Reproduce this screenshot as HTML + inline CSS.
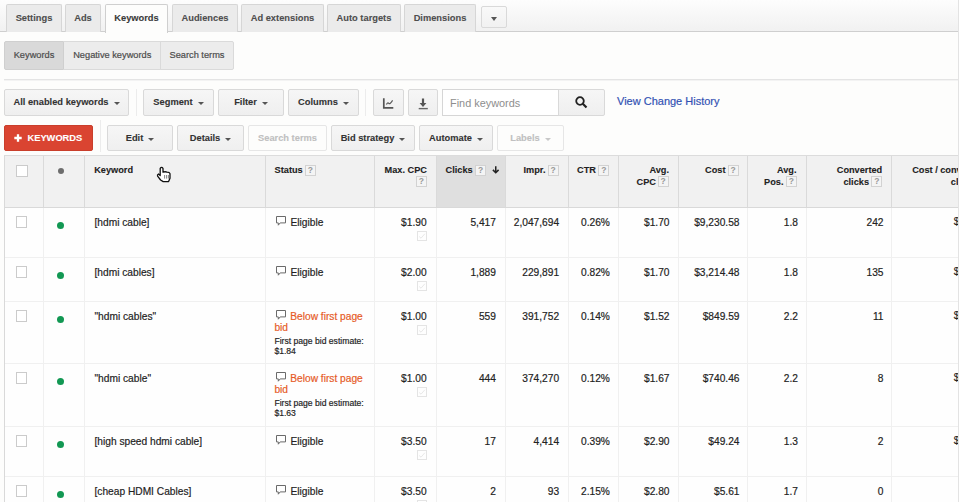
<!DOCTYPE html>
<html><head><meta charset="utf-8">
<style>
*{box-sizing:border-box;margin:0;padding:0}
html,body{width:959px;height:502px;overflow:hidden;background:#fdfdfc;font-family:"Liberation Sans",sans-serif;color:#222}
.a{position:absolute}
#tabbar{left:0;top:0;width:959px;height:32px;background:linear-gradient(#fdfdfd,#f1f1f1);border-bottom:1px solid #cfcfcf}
.tab{-webkit-text-stroke:0.1px currentColor;position:absolute;top:4px;height:28px;background:#ebebeb;border:1px solid #d6d6d6;border-bottom:none;border-radius:2px 2px 0 0;font-weight:bold;font-size:9.3px;color:#4e4e4e;text-align:center;line-height:27px}
.tab.on{background:#fdfdfc;height:29px;border-color:#cfcfcf}
#rline{left:958px;top:0;width:1px;height:502px;background:#c8c8c8}
.sub{border-radius:0;-webkit-text-stroke:0.2px currentColor;position:absolute;top:41px;height:29px;background:#ececec;border:1px solid #dadada;font-size:9.25px;color:#4c4c4c;line-height:26.3px;text-align:center}
.hl{left:4px;top:79px;width:955px;height:2px;background:linear-gradient(#e4e4e4 50%,#f3f3f3 50%)}
.btn{-webkit-text-stroke:0.1px currentColor;position:absolute;height:26px;background:linear-gradient(#f6f6f6,#efefef);border:1px solid #d9d9d9;border-radius:2px;font-weight:bold;font-size:9.3px;color:#333;text-align:center;line-height:24px;white-space:nowrap}
.btn.dis{background:#fdfdfc;border-color:#e6e6e6;color:#c0c0c0}
.caret{display:inline-block;width:0;height:0;border-left:3.5px solid transparent;border-right:3.5px solid transparent;border-top:3.5px solid #555;vertical-align:middle;margin-left:5px;margin-top:-1px;position:relative;top:1px}
.dis .caret{border-top-color:#c8c8c8}
.vd{position:absolute;width:1px;background:#ececec}
#table{left:4px;top:155px;width:954px;height:347px}
.th{position:absolute;top:156px;height:51px;background:#f1f1f1}
.hd{position:absolute;font-weight:bold;font-size:9.4px;color:#333;line-height:12px}
.q{position:absolute;width:11px;height:11px;border:1px solid #d2d2d2;background:#f4f4f4;color:#999;font-weight:bold;font-size:8.5px;line-height:9.5px;text-align:center}
.cl{position:absolute;width:1px;background:#dedede}
.rl{position:absolute;left:4px;width:954px;height:1px;background:#ececec}
.t{position:absolute;font-size:10px;color:#222;white-space:nowrap;line-height:12px;-webkit-text-stroke:0.18px currentColor}
.r{text-align:right}
.cb{position:absolute;left:16px;width:11px;height:11.5px;border:1px solid #cbcbcb;background:#fff}
.dot{position:absolute;left:58px;width:6.5px;height:6.5px;border-radius:50%;background:#1e9e5a}
.bub{position:absolute;width:11px;height:10px}
.or{color:#e4602c}
.sm{font-size:9px;line-height:10px}
.ed{position:absolute;width:10px;height:10px;border:1px solid #e3e3e3}
</style></head><body>
<div id="tabbar" class="a"></div>
<div class="tab" style="left:6px;width:56px">Settings</div>
<div class="tab" style="left:65px;width:36px">Ads</div>
<div class="tab on" style="left:105px;width:63px;color:#3a3a3a">Keywords</div>
<div class="tab" style="left:172px;width:66px">Audiences</div>
<div class="tab" style="left:241px;width:83px">Ad extensions</div>
<div class="tab" style="left:327px;width:74px">Auto targets</div>
<div class="tab" style="left:404px;width:72px">Dimensions</div>
<div class="btn" style="left:481px;top:6px;width:26px;height:22px;line-height:21px;background:linear-gradient(#f9f9f9,#f1f1f1)"><span class="caret" style="margin-left:0;border-left-width:3.8px;border-right-width:3.8px;border-top-width:4px;margin-top:0"></span></div>

<div class="sub" style="left:4px;width:60px;background:#d9d9d9;border-color:#cfcfcf;border-radius:2px 0 0 2px">Keywords</div>
<div class="sub" style="left:64px;width:96.5px;border-left:none;border-right:none">Negative keywords</div>
<div class="sub" style="left:160px;width:74px;border-radius:0 2px 2px 0">Search terms</div>
<div class="a hl"></div>

<!-- toolbar row 1 -->
<div class="btn" style="left:4px;top:89px;width:125px;height:27px;line-height:25px">All enabled keywords<span class="caret"></span></div>
<div class="vd" style="left:136px;top:89px;height:27px"></div>
<div class="btn" style="left:143px;top:89px;width:71px;height:27px;line-height:25px">Segment<span class="caret"></span></div>
<div class="btn" style="left:218px;top:89px;width:66px;height:27px;line-height:25px">Filter<span class="caret"></span></div>
<div class="btn" style="left:288px;top:89px;width:71px;height:27px;line-height:25px">Columns<span class="caret"></span></div>
<div class="vd" style="left:365px;top:89px;height:27px"></div>
<div class="btn" style="left:373px;top:89px;width:31px;height:27px;line-height:25px">
 <svg class="a" style="left:8.2px;top:6px" width="14" height="14" viewBox="0 0 14 14"><path d="M1.8 2.3V11.9H11.3" fill="none" stroke="#555" stroke-width="1.7"/><path d="M4.4 8.6Q5.6 6 6.8 7.3T10.6 4.4" fill="none" stroke="#5a5a5a" stroke-width="1.2"/></svg>
</div>
<div class="btn" style="left:408px;top:89px;width:30px;height:27px;line-height:25px">
 <svg class="a" style="left:8.2px;top:6px" width="14" height="14" viewBox="0 0 14 14"><path d="M6 2.5V7.5" stroke="#555" stroke-width="2.2"/><path d="M2.6 7H9.4L6 10.9Z" fill="#555"/><path d="M1.7 12.6H10.8" stroke="#666" stroke-width="1.4"/></svg>
</div>
<div class="a" style="left:442px;top:89px;width:117px;height:27px;background:#fff;border:1px solid #d6d6d6;border-right:none;font-size:10.9px;color:#8e8e8e;line-height:26.5px;padding-left:7px">Find keywords</div>
<div class="btn" style="left:558px;top:89px;width:47px;height:27px;border-radius:0 2px 2px 0">
 <svg class="a" style="left:16px;top:6px" width="13" height="13" viewBox="0 0 13 13"><circle cx="5" cy="5" r="3.8" fill="none" stroke="#222" stroke-width="1.8"/><path d="M7.8 7.8L11.5 11.5" stroke="#222" stroke-width="2.2"/></svg>
</div>
<div class="t" style="left:617px;top:95.3px;font-size:11px;color:#3151b3">View Change History</div>

<!-- toolbar row 2 -->
<div class="btn" style="left:4px;top:125px;width:89px;background:#da4431;border-color:#c93e2b;color:#fff;font-size:9.3px"><svg class="a" style="left:9.3px;top:7.6px" width="8" height="8" viewBox="0 0 8 8"><path d="M4 0.3V7.7M0.3 4H7.7" stroke="#fff" stroke-width="2.3"/></svg><span style="position:absolute;left:22.5px;top:0">KEYWORDS</span></div>
<div class="vd" style="left:100px;top:120px;height:32px"></div>
<div class="btn" style="left:107px;top:125px;width:66px">Edit<span class="caret"></span></div>
<div class="btn" style="left:177px;top:125px;width:67px">Details<span class="caret"></span></div>
<div class="btn dis" style="left:248px;top:125px;width:79px;font-weight:bold">Search terms</div>
<div class="btn" style="left:331px;top:125px;width:84px">Bid strategy<span class="caret"></span></div>
<div class="btn" style="left:419px;top:125px;width:74px">Automate<span class="caret"></span></div>
<div class="btn dis" style="left:497px;top:125px;width:67px">Labels<span class="caret"></span></div>

<!-- table -->
<div class="a" style="left:4px;top:207px;width:954px;height:295px;background:#fefefe"></div>
<div class="a" style="left:4px;top:155px;width:954px;height:53px;background:#f1f1f1;border-top:1px solid #dcdcdc;border-bottom:1px solid #d9d9d9"></div>
<div class="a" style="left:436px;top:156px;width:69px;height:51px;background:#dfdfdf"></div>
<div class="a" style="left:4px;top:257px;width:954px;height:1px;background:#f0f0f0"></div>
<div class="a" style="left:4px;top:301px;width:954px;height:1px;background:#f0f0f0"></div>
<div class="a" style="left:4px;top:363px;width:954px;height:1px;background:#f0f0f0"></div>
<div class="a" style="left:4px;top:426px;width:954px;height:1px;background:#f0f0f0"></div>
<div class="a" style="left:4px;top:476px;width:954px;height:1px;background:#f0f0f0"></div>
<div class="a" style="left:4px;top:156px;width:1px;height:51px;background:#dadada"></div>
<div class="a" style="left:4px;top:208px;width:1px;height:294px;background:#d9d9d9"></div>
<div class="a" style="left:43px;top:156px;width:1px;height:51px;background:#dadada"></div>
<div class="a" style="left:43px;top:208px;width:1px;height:294px;background:#f0f0f0"></div>
<div class="a" style="left:84px;top:156px;width:1px;height:51px;background:#dadada"></div>
<div class="a" style="left:84px;top:208px;width:1px;height:294px;background:#f0f0f0"></div>
<div class="a" style="left:265px;top:156px;width:1px;height:51px;background:#dadada"></div>
<div class="a" style="left:265px;top:208px;width:1px;height:294px;background:#f0f0f0"></div>
<div class="a" style="left:374px;top:156px;width:1px;height:51px;background:#dadada"></div>
<div class="a" style="left:374px;top:208px;width:1px;height:294px;background:#f0f0f0"></div>
<div class="a" style="left:436px;top:156px;width:1px;height:51px;background:#dadada"></div>
<div class="a" style="left:436px;top:208px;width:1px;height:294px;background:#f0f0f0"></div>
<div class="a" style="left:505px;top:156px;width:1px;height:51px;background:#dadada"></div>
<div class="a" style="left:505px;top:208px;width:1px;height:294px;background:#f0f0f0"></div>
<div class="a" style="left:568px;top:156px;width:1px;height:51px;background:#dadada"></div>
<div class="a" style="left:568px;top:208px;width:1px;height:294px;background:#f0f0f0"></div>
<div class="a" style="left:618px;top:156px;width:1px;height:51px;background:#dadada"></div>
<div class="a" style="left:618px;top:208px;width:1px;height:294px;background:#f0f0f0"></div>
<div class="a" style="left:678px;top:156px;width:1px;height:51px;background:#dadada"></div>
<div class="a" style="left:678px;top:208px;width:1px;height:294px;background:#f0f0f0"></div>
<div class="a" style="left:747px;top:156px;width:1px;height:51px;background:#dadada"></div>
<div class="a" style="left:747px;top:208px;width:1px;height:294px;background:#f0f0f0"></div>
<div class="a" style="left:806px;top:156px;width:1px;height:51px;background:#dadada"></div>
<div class="a" style="left:806px;top:208px;width:1px;height:294px;background:#f0f0f0"></div>
<div class="a" style="left:891px;top:156px;width:1px;height:51px;background:#dadada"></div>
<div class="a" style="left:891px;top:208px;width:1px;height:294px;background:#f0f0f0"></div>
<div class="a" style="left:958px;top:0;width:1px;height:502px;background:#e3e3e3"></div>
<div class="cb" style="top:165px;height:11.5px;width:11.5px"></div>
<div class="a" style="left:58px;top:167.5px;width:6px;height:6px;border-radius:50%;background:#6d6d6d"></div>
<div class="t" style="top:164.89px;font-size:9.2px;line-height:11.04px;font-weight:bold;-webkit-text-stroke:0.1px currentColor;color:#222;left:94.20px;">Keyword</div>
<div class="t" style="top:164.89px;font-size:9.2px;line-height:11.04px;font-weight:bold;-webkit-text-stroke:0.1px currentColor;color:#222;left:274.60px;">Status</div>
<div class="q" style="left:304.9px;top:164.5px">?</div>
<div class="t" style="top:164.89px;font-size:9.2px;line-height:11.04px;font-weight:bold;-webkit-text-stroke:0.1px currentColor;color:#222;left:127.00px;width:300px;text-align:right;">Max. CPC</div>
<div class="q" style="left:415.9px;top:175.8px">?</div>
<div class="t" style="top:164.89px;font-size:9.2px;line-height:11.04px;font-weight:bold;-webkit-text-stroke:0.1px currentColor;color:#222;left:445.60px;">Clicks</div>
<div class="q" style="left:475.2px;top:164.5px">?</div>
<svg class="a" style="left:491.5px;top:166px" width="8" height="8" viewBox="0 0 8 8"><path d="M3.75 0.3V6.6M0.9 3.9L3.75 6.8L6.6 3.9" fill="none" stroke="#222" stroke-width="1.5"/></svg>
<div class="t" style="top:164.89px;font-size:9.2px;line-height:11.04px;font-weight:bold;-webkit-text-stroke:0.1px currentColor;color:#222;left:245.50px;width:300px;text-align:right;">Impr.</div>
<div class="q" style="left:547.7px;top:164.5px">?</div>
<div class="t" style="top:164.89px;font-size:9.2px;line-height:11.04px;font-weight:bold;-webkit-text-stroke:0.1px currentColor;color:#222;left:296.00px;width:300px;text-align:right;">CTR</div>
<div class="q" style="left:598.4px;top:164.5px">?</div>
<div class="t" style="top:164.89px;font-size:9.2px;line-height:11.04px;font-weight:bold;-webkit-text-stroke:0.1px currentColor;color:#222;left:369.00px;width:300px;text-align:right;">Avg.</div>
<div class="t" style="top:176.89px;font-size:9.2px;line-height:11.04px;font-weight:bold;-webkit-text-stroke:0.1px currentColor;color:#222;left:356.00px;width:300px;text-align:right;">CPC</div>
<div class="q" style="left:657.7px;top:176.2px">?</div>
<div class="t" style="top:164.89px;font-size:9.2px;line-height:11.04px;font-weight:bold;-webkit-text-stroke:0.1px currentColor;color:#222;left:425.50px;width:300px;text-align:right;">Cost</div>
<div class="q" style="left:727.7px;top:164.5px">?</div>
<div class="t" style="top:164.89px;font-size:9.2px;line-height:11.04px;font-weight:bold;-webkit-text-stroke:0.1px currentColor;color:#222;left:496.50px;width:300px;text-align:right;">Avg.</div>
<div class="t" style="top:176.89px;font-size:9.2px;line-height:11.04px;font-weight:bold;-webkit-text-stroke:0.1px currentColor;color:#222;left:483.50px;width:300px;text-align:right;">Pos.</div>
<div class="q" style="left:785.9px;top:176.2px">?</div>
<div class="t" style="top:164.89px;font-size:9.2px;line-height:11.04px;font-weight:bold;-webkit-text-stroke:0.1px currentColor;color:#222;left:582.20px;width:300px;text-align:right;">Converted</div>
<div class="t" style="top:176.89px;font-size:9.2px;line-height:11.04px;font-weight:bold;-webkit-text-stroke:0.1px currentColor;color:#222;left:569.00px;width:300px;text-align:right;">clicks</div>
<div class="q" style="left:871.4px;top:176.2px">?</div>
<div class="a" style="left:892px;top:156px;width:66px;height:51px;overflow:hidden"><div class="t" style="top:8.89px;font-size:9.2px;line-height:11.04px;font-weight:bold;-webkit-text-stroke:0.1px currentColor;color:#222;left:20.20px;">Cost / converted</div>
<div class="t" style="top:20.89px;font-size:9.2px;line-height:11.04px;font-weight:bold;-webkit-text-stroke:0.1px currentColor;color:#222;left:58.80px;">click</div>
</div>
<svg class="a" style="left:150px;top:160px" width="30" height="30" viewBox="0 0 30 30">
<path d="M10.2 14.5V8.4Q11.6 6.4 13 8.4V12.2Q15 11.3 17 12.1Q19.6 12.2 20 13.6V18.2L18.6 21.6H13.2L10.6 20L7.6 16.2Q7 14.6 8.4 14L10.2 15.6Z" fill="#fff" stroke="#111" stroke-width="1.3" stroke-linejoin="round"/>
<path d="M14.6 15v3.6M16.6 15v3.6M18.4 15v3.6" stroke="#777" stroke-width="0.9"/>
</svg>
<div class="cb" style="top:216.2px"></div>
<div class="a" style="left:57.2px;top:222.1px;width:7px;height:7px;border-radius:50%;background:#129853"></div>
<div class="t" style="top:216.85px;font-size:10.2px;line-height:12.24px;color:#222;left:94.50px;">[hdmi cable]</div>
<svg class="a" style="left:276px;top:216.2px" width="11" height="11" viewBox="0 0 11 11"><path d="M0.5 0.5H9.5V6.9H4.2L2.3 9.2V6.9H0.5Z" fill="none" stroke="#6a6a6a" stroke-width="1" stroke-linejoin="miter"/></svg>
<div class="t" style="top:216.85px;font-size:10.2px;line-height:12.24px;color:#222;left:290.50px;">Eligible</div>
<div class="t" style="top:216.85px;font-size:10.2px;line-height:12.24px;color:#222;left:126.60px;width:300px;text-align:right;">$1.90</div>
<div class="t" style="top:216.85px;font-size:10.2px;line-height:12.24px;color:#222;left:195.90px;width:300px;text-align:right;">5,417</div>
<div class="t" style="top:216.85px;font-size:10.2px;line-height:12.24px;color:#222;left:259.10px;width:300px;text-align:right;">2,047,694</div>
<div class="t" style="top:216.85px;font-size:10.2px;line-height:12.24px;color:#222;left:309.90px;width:300px;text-align:right;">0.26%</div>
<div class="t" style="top:216.85px;font-size:10.2px;line-height:12.24px;color:#222;left:369.50px;width:300px;text-align:right;">$1.70</div>
<div class="t" style="top:216.85px;font-size:10.2px;line-height:12.24px;color:#222;left:439.50px;width:300px;text-align:right;">$9,230.58</div>
<div class="t" style="top:216.85px;font-size:10.2px;line-height:12.24px;color:#222;left:498.00px;width:300px;text-align:right;">1.8</div>
<div class="t" style="top:216.85px;font-size:10.2px;line-height:12.24px;color:#222;left:583.50px;width:300px;text-align:right;">242</div>
<svg class="a" style="left:417px;top:230.5px" width="10" height="10" viewBox="0 0 10 10"><rect x="0.5" y="0.5" width="9" height="9" fill="none" stroke="#e4e4e4"/><path d="M2.2 5.5L4 7.2L7.8 2.8" fill="none" stroke="#e8e8e8" stroke-width="1"/></svg>
<div class="a" style="left:892px;top:207px;width:66px;height:40px;overflow:hidden"><div class="t" style="top:8.55px;font-size:10.2px;line-height:12.24px;color:#222;left:61.80px;">$</div>
</div>
<div class="cb" style="top:266.2px"></div>
<div class="a" style="left:57.2px;top:272.1px;width:7px;height:7px;border-radius:50%;background:#129853"></div>
<div class="t" style="top:266.85px;font-size:10.2px;line-height:12.24px;color:#222;left:94.50px;">[hdmi cables]</div>
<svg class="a" style="left:276px;top:266.2px" width="11" height="11" viewBox="0 0 11 11"><path d="M0.5 0.5H9.5V6.9H4.2L2.3 9.2V6.9H0.5Z" fill="none" stroke="#6a6a6a" stroke-width="1" stroke-linejoin="miter"/></svg>
<div class="t" style="top:266.85px;font-size:10.2px;line-height:12.24px;color:#222;left:290.50px;">Eligible</div>
<div class="t" style="top:266.85px;font-size:10.2px;line-height:12.24px;color:#222;left:126.60px;width:300px;text-align:right;">$2.00</div>
<div class="t" style="top:266.85px;font-size:10.2px;line-height:12.24px;color:#222;left:195.90px;width:300px;text-align:right;">1,889</div>
<div class="t" style="top:266.85px;font-size:10.2px;line-height:12.24px;color:#222;left:259.10px;width:300px;text-align:right;">229,891</div>
<div class="t" style="top:266.85px;font-size:10.2px;line-height:12.24px;color:#222;left:309.90px;width:300px;text-align:right;">0.82%</div>
<div class="t" style="top:266.85px;font-size:10.2px;line-height:12.24px;color:#222;left:369.50px;width:300px;text-align:right;">$1.70</div>
<div class="t" style="top:266.85px;font-size:10.2px;line-height:12.24px;color:#222;left:439.50px;width:300px;text-align:right;">$3,214.48</div>
<div class="t" style="top:266.85px;font-size:10.2px;line-height:12.24px;color:#222;left:498.00px;width:300px;text-align:right;">1.8</div>
<div class="t" style="top:266.85px;font-size:10.2px;line-height:12.24px;color:#222;left:583.50px;width:300px;text-align:right;">135</div>
<svg class="a" style="left:417px;top:280.5px" width="10" height="10" viewBox="0 0 10 10"><rect x="0.5" y="0.5" width="9" height="9" fill="none" stroke="#e4e4e4"/><path d="M2.2 5.5L4 7.2L7.8 2.8" fill="none" stroke="#e8e8e8" stroke-width="1"/></svg>
<div class="a" style="left:892px;top:257px;width:66px;height:40px;overflow:hidden"><div class="t" style="top:8.55px;font-size:10.2px;line-height:12.24px;color:#222;left:61.80px;">$</div>
</div>
<div class="cb" style="top:310.2px"></div>
<div class="a" style="left:57.2px;top:316.1px;width:7px;height:7px;border-radius:50%;background:#129853"></div>
<div class="t" style="top:310.85px;font-size:10.2px;line-height:12.24px;color:#222;left:94.50px;">&quot;hdmi cables&quot;</div>
<svg class="a" style="left:276px;top:310.2px" width="11" height="11" viewBox="0 0 11 11"><path d="M0.5 0.5H9.5V6.9H4.2L2.3 9.2V6.9H0.5Z" fill="none" stroke="#6a6a6a" stroke-width="1" stroke-linejoin="miter"/></svg>
<div class="t" style="top:310.85px;font-size:10.2px;line-height:12.24px;color:#e65a26;left:290.30px;">Below first page</div>
<div class="t" style="top:322.45px;font-size:10.2px;line-height:12.24px;color:#e65a26;left:274.40px;">bid</div>
<div class="t" style="top:335.56px;font-size:8.6px;line-height:10.32px;color:#222;left:274.40px;">First page bid estimate:</div>
<div class="t" style="top:346.16px;font-size:8.6px;line-height:10.32px;color:#222;left:274.40px;">$1.84</div>
<div class="t" style="top:310.85px;font-size:10.2px;line-height:12.24px;color:#222;left:126.60px;width:300px;text-align:right;">$1.00</div>
<div class="t" style="top:310.85px;font-size:10.2px;line-height:12.24px;color:#222;left:195.90px;width:300px;text-align:right;">559</div>
<div class="t" style="top:310.85px;font-size:10.2px;line-height:12.24px;color:#222;left:259.10px;width:300px;text-align:right;">391,752</div>
<div class="t" style="top:310.85px;font-size:10.2px;line-height:12.24px;color:#222;left:309.90px;width:300px;text-align:right;">0.14%</div>
<div class="t" style="top:310.85px;font-size:10.2px;line-height:12.24px;color:#222;left:369.50px;width:300px;text-align:right;">$1.52</div>
<div class="t" style="top:310.85px;font-size:10.2px;line-height:12.24px;color:#222;left:439.50px;width:300px;text-align:right;">$849.59</div>
<div class="t" style="top:310.85px;font-size:10.2px;line-height:12.24px;color:#222;left:498.00px;width:300px;text-align:right;">2.2</div>
<div class="t" style="top:310.85px;font-size:10.2px;line-height:12.24px;color:#222;left:583.50px;width:300px;text-align:right;">11</div>
<svg class="a" style="left:417px;top:324.5px" width="10" height="10" viewBox="0 0 10 10"><rect x="0.5" y="0.5" width="9" height="9" fill="none" stroke="#e4e4e4"/><path d="M2.2 5.5L4 7.2L7.8 2.8" fill="none" stroke="#e8e8e8" stroke-width="1"/></svg>
<div class="a" style="left:892px;top:301px;width:66px;height:40px;overflow:hidden"><div class="t" style="top:8.55px;font-size:10.2px;line-height:12.24px;color:#222;left:61.80px;">$</div>
</div>
<div class="cb" style="top:372.2px"></div>
<div class="a" style="left:57.2px;top:378.1px;width:7px;height:7px;border-radius:50%;background:#129853"></div>
<div class="t" style="top:372.85px;font-size:10.2px;line-height:12.24px;color:#222;left:94.50px;">&quot;hdmi cable&quot;</div>
<svg class="a" style="left:276px;top:372.2px" width="11" height="11" viewBox="0 0 11 11"><path d="M0.5 0.5H9.5V6.9H4.2L2.3 9.2V6.9H0.5Z" fill="none" stroke="#6a6a6a" stroke-width="1" stroke-linejoin="miter"/></svg>
<div class="t" style="top:372.85px;font-size:10.2px;line-height:12.24px;color:#e65a26;left:290.30px;">Below first page</div>
<div class="t" style="top:384.45px;font-size:10.2px;line-height:12.24px;color:#e65a26;left:274.40px;">bid</div>
<div class="t" style="top:397.56px;font-size:8.6px;line-height:10.32px;color:#222;left:274.40px;">First page bid estimate:</div>
<div class="t" style="top:408.16px;font-size:8.6px;line-height:10.32px;color:#222;left:274.40px;">$1.63</div>
<div class="t" style="top:372.85px;font-size:10.2px;line-height:12.24px;color:#222;left:126.60px;width:300px;text-align:right;">$1.00</div>
<div class="t" style="top:372.85px;font-size:10.2px;line-height:12.24px;color:#222;left:195.90px;width:300px;text-align:right;">444</div>
<div class="t" style="top:372.85px;font-size:10.2px;line-height:12.24px;color:#222;left:259.10px;width:300px;text-align:right;">374,270</div>
<div class="t" style="top:372.85px;font-size:10.2px;line-height:12.24px;color:#222;left:309.90px;width:300px;text-align:right;">0.12%</div>
<div class="t" style="top:372.85px;font-size:10.2px;line-height:12.24px;color:#222;left:369.50px;width:300px;text-align:right;">$1.67</div>
<div class="t" style="top:372.85px;font-size:10.2px;line-height:12.24px;color:#222;left:439.50px;width:300px;text-align:right;">$740.46</div>
<div class="t" style="top:372.85px;font-size:10.2px;line-height:12.24px;color:#222;left:498.00px;width:300px;text-align:right;">2.2</div>
<div class="t" style="top:372.85px;font-size:10.2px;line-height:12.24px;color:#222;left:583.50px;width:300px;text-align:right;">8</div>
<svg class="a" style="left:417px;top:386.5px" width="10" height="10" viewBox="0 0 10 10"><rect x="0.5" y="0.5" width="9" height="9" fill="none" stroke="#e4e4e4"/><path d="M2.2 5.5L4 7.2L7.8 2.8" fill="none" stroke="#e8e8e8" stroke-width="1"/></svg>
<div class="a" style="left:892px;top:363px;width:66px;height:40px;overflow:hidden"><div class="t" style="top:8.55px;font-size:10.2px;line-height:12.24px;color:#222;left:61.80px;">$</div>
</div>
<div class="cb" style="top:435.2px"></div>
<div class="a" style="left:57.2px;top:441.1px;width:7px;height:7px;border-radius:50%;background:#129853"></div>
<div class="t" style="top:435.85px;font-size:10.2px;line-height:12.24px;color:#222;left:94.50px;">[high speed hdmi cable]</div>
<svg class="a" style="left:276px;top:435.2px" width="11" height="11" viewBox="0 0 11 11"><path d="M0.5 0.5H9.5V6.9H4.2L2.3 9.2V6.9H0.5Z" fill="none" stroke="#6a6a6a" stroke-width="1" stroke-linejoin="miter"/></svg>
<div class="t" style="top:435.85px;font-size:10.2px;line-height:12.24px;color:#222;left:290.50px;">Eligible</div>
<div class="t" style="top:435.85px;font-size:10.2px;line-height:12.24px;color:#222;left:126.60px;width:300px;text-align:right;">$3.50</div>
<div class="t" style="top:435.85px;font-size:10.2px;line-height:12.24px;color:#222;left:195.90px;width:300px;text-align:right;">17</div>
<div class="t" style="top:435.85px;font-size:10.2px;line-height:12.24px;color:#222;left:259.10px;width:300px;text-align:right;">4,414</div>
<div class="t" style="top:435.85px;font-size:10.2px;line-height:12.24px;color:#222;left:309.90px;width:300px;text-align:right;">0.39%</div>
<div class="t" style="top:435.85px;font-size:10.2px;line-height:12.24px;color:#222;left:369.50px;width:300px;text-align:right;">$2.90</div>
<div class="t" style="top:435.85px;font-size:10.2px;line-height:12.24px;color:#222;left:439.50px;width:300px;text-align:right;">$49.24</div>
<div class="t" style="top:435.85px;font-size:10.2px;line-height:12.24px;color:#222;left:498.00px;width:300px;text-align:right;">1.3</div>
<div class="t" style="top:435.85px;font-size:10.2px;line-height:12.24px;color:#222;left:583.50px;width:300px;text-align:right;">2</div>
<svg class="a" style="left:417px;top:449.5px" width="10" height="10" viewBox="0 0 10 10"><rect x="0.5" y="0.5" width="9" height="9" fill="none" stroke="#e4e4e4"/><path d="M2.2 5.5L4 7.2L7.8 2.8" fill="none" stroke="#e8e8e8" stroke-width="1"/></svg>
<div class="a" style="left:892px;top:426px;width:66px;height:40px;overflow:hidden"><div class="t" style="top:8.55px;font-size:10.2px;line-height:12.24px;color:#222;left:61.80px;">$</div>
</div>
<div class="cb" style="top:485.2px"></div>
<div class="a" style="left:57.2px;top:491.1px;width:7px;height:7px;border-radius:50%;background:#129853"></div>
<div class="t" style="top:485.85px;font-size:10.2px;line-height:12.24px;color:#222;left:94.50px;">[cheap HDMI Cables]</div>
<svg class="a" style="left:276px;top:485.2px" width="11" height="11" viewBox="0 0 11 11"><path d="M0.5 0.5H9.5V6.9H4.2L2.3 9.2V6.9H0.5Z" fill="none" stroke="#6a6a6a" stroke-width="1" stroke-linejoin="miter"/></svg>
<div class="t" style="top:485.85px;font-size:10.2px;line-height:12.24px;color:#222;left:290.50px;">Eligible</div>
<div class="t" style="top:485.85px;font-size:10.2px;line-height:12.24px;color:#222;left:126.60px;width:300px;text-align:right;">$3.50</div>
<div class="t" style="top:485.85px;font-size:10.2px;line-height:12.24px;color:#222;left:195.90px;width:300px;text-align:right;">2</div>
<div class="t" style="top:485.85px;font-size:10.2px;line-height:12.24px;color:#222;left:259.10px;width:300px;text-align:right;">93</div>
<div class="t" style="top:485.85px;font-size:10.2px;line-height:12.24px;color:#222;left:309.90px;width:300px;text-align:right;">2.15%</div>
<div class="t" style="top:485.85px;font-size:10.2px;line-height:12.24px;color:#222;left:369.50px;width:300px;text-align:right;">$2.80</div>
<div class="t" style="top:485.85px;font-size:10.2px;line-height:12.24px;color:#222;left:439.50px;width:300px;text-align:right;">$5.61</div>
<div class="t" style="top:485.85px;font-size:10.2px;line-height:12.24px;color:#222;left:498.00px;width:300px;text-align:right;">1.7</div>
<div class="t" style="top:485.85px;font-size:10.2px;line-height:12.24px;color:#222;left:583.50px;width:300px;text-align:right;">0</div>
<svg class="a" style="left:417px;top:499.5px" width="10" height="10" viewBox="0 0 10 10"><rect x="0.5" y="0.5" width="9" height="9" fill="none" stroke="#e4e4e4"/><path d="M2.2 5.5L4 7.2L7.8 2.8" fill="none" stroke="#e8e8e8" stroke-width="1"/></svg>
</body></html>
